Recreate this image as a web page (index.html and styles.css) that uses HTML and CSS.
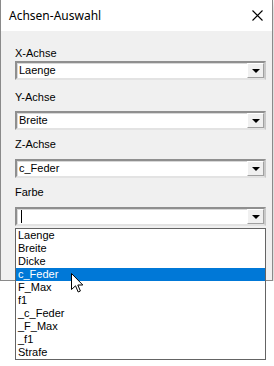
FILE: index.html
```html
<!DOCTYPE html>
<html lang="de">
<head>
    <meta charset="UTF-8">
    <meta name="viewport" content="width=device-width, initial-scale=1.0">
    <title>Achsen-Auswahl</title>
    <link rel="stylesheet" href="styles.css">
</head>
<body>
    <div class="window">
        <div class="titlebar">
            <span class="title">Achsen-Auswahl</span>
            <svg class="close" width="11" height="11" viewBox="0 0 11 11">
                <path d="M0.5 0.5 L10.5 10.5 M10.5 0.5 L0.5 10.5" stroke="#000" stroke-width="1.1" fill="none"/>
            </svg>
        </div>
        <div class="content">
            <div class="label label-first">X-Achse</div>
            <div class="combo">
                <span class="combo-text">Laenge</span>
                <span class="combo-btn"><span class="arrow"></span></span>
            </div>

            <div class="label label-y">Y-Achse</div>
            <div class="combo">
                <span class="combo-text">Breite</span>
                <span class="combo-btn"><span class="arrow"></span></span>
            </div>

            <div class="label">Z-Achse</div>
            <div class="combo">
                <span class="combo-text">c_Feder</span>
                <span class="combo-btn"><span class="arrow"></span></span>
            </div>

            <div class="label">Farbe</div>
            <div class="combo">
                <span class="combo-text"><span class="caret"></span></span>
                <span class="combo-btn"><span class="arrow"></span></span>
            </div>
        </div>
    </div>

    <!-- offene Liste der Farbe-Auswahl -->
    <ul class="droplist">
        <li>Laenge</li>
        <li>Breite</li>
        <li>Dicke</li>
        <li class="selected">c_Feder</li>
        <li>F_Max</li>
        <li>f1</li>
        <li>_c_Feder</li>
        <li>_F_Max</li>
        <li>_f1</li>
        <li>Strafe</li>
    </ul>

    <svg class="cursor" width="13" height="20" viewBox="0 0 13 20">
        <path d="M0.5 0.5 L0.5 16.5 L4.5 12.8 L7.2 19 L9.4 18 L6.8 12 L11.8 12 Z" fill="#fff" stroke="#000" stroke-width="1" stroke-linejoin="miter"/>
    </svg>
</body>
</html>
```

FILE: styles.css
```css
body {
    margin: 0;
    background: #fff;
    font-family: "Liberation Sans", Arial, sans-serif;
    font-size: 11px;
    color: #000;
}
.window {
    width: 273px;
    height: 281px;
    box-sizing: border-box;
    background: #f0f0f0;
    border: 1px solid #8a8a8a;
    border-top: none;
    box-shadow: 0 3px 9px rgba(0, 0, 0, 0.28);
}
.titlebar {
    height: 31px;
    background: #fff;
    display: flex;
    align-items: center;
    justify-content: space-between;
    padding: 0 9px 0 8px;
}
.title {
    font-family: "Noto Sans", sans-serif;
    font-size: 12px;
    padding-bottom: 1px;
}
.close {
    margin-top: 0;
}
.content {
    padding: 0 6px 0 14px;
}
.label {
    height: 13px;
    line-height: 13px;
    margin: 8px 0 8px 0;
}
.label-first {
    margin: 16px 0 1px 0;
}
.label-y {
    margin: 11px 0 7px 0;
}
.combo {
    height: 19px;
    box-sizing: border-box;
    background: #fff;
    border: 2px solid;
    border-color: #8f8f8f #c9c9c9 #e3e3e3 #8f8f8f;
    box-shadow: inset 1px 1px 0 #d8d8d8;
    display: flex;
    align-items: stretch;
}
.combo-text {
    flex: 1;
    padding-left: 2px;
    line-height: 15px;
    display: flex;
    align-items: center;
}
.caret {
    width: 1px;
    height: 13px;
    background: #000;
    margin-left: 2px;
}
.combo-btn {
    width: 17px;
    box-sizing: border-box;
    background: #f0f0f0;
    border-left: 1px solid #fff;
    border-top: 1px solid #fff;
    border-right: 1px solid #a0a0a0;
    border-bottom: 1px solid #a0a0a0;
    display: flex;
    align-items: center;
    justify-content: center;
}
.arrow {
    width: 0;
    height: 0;
    border-left: 4px solid transparent;
    border-right: 4px solid transparent;
    border-top: 4px solid #000;
    margin-top: 1px;
}
.droplist {
    position: absolute;
    left: 15px;
    top: 228px;
    width: 251px;
    box-sizing: border-box;
    margin: 0;
    padding: 0;
    list-style: none;
    background: #fff;
    border: 1px solid #646464;
}
.droplist li {
    height: 13px;
    line-height: 13px;
    padding-left: 2px;
}
.droplist li.selected {
    background: #0078d7;
    color: #fff;
}
.cursor {
    position: absolute;
    left: 71px;
    top: 273px;
}
```
